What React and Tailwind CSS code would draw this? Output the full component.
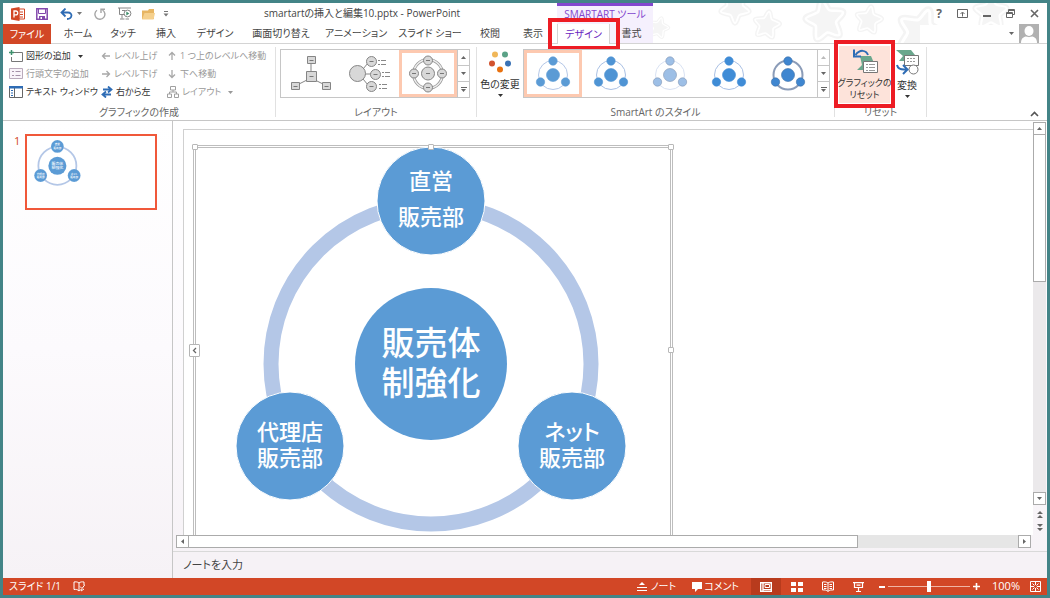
// src/App.jsx
import React from "react";

const TABS = [
  { label: "ホーム", cls: "w-[54px]" },
  { label: "タッチ", cls: "w-[36px]" },
  { label: "挿入", cls: "w-[50px]" },
  { label: "デザイン", cls: "w-[48px]" },
  { label: "画面切り替え", cls: "w-[84px]" },
  { label: "アニメーション", cls: "w-[66px]" },
  { label: "スライド ショー", cls: "w-[82px]" },
  { label: "校閲", cls: "w-[38px]" },
  { label: "表示", cls: "w-[48px]" },
];

const STAR =
  "M12 1c1.4 0 2 5 3.2 6.2S23 8.400 23 10s-4.600 3.600-5 5 1.800 6.600.6 7.600S13.400 20 12 20s-5.400 3.600-6.600 2.600S6.400 16.400 6 15s-5-3.400-5-5 6.600-1.600 7.800-2.800S10.600 1 12 1z";

function Caret({ className = "" }) {
  return (
    <svg className={`h-[3px] w-[5px] shrink-0 ${className}`} viewBox="0 0 5 3" fill="currentColor" aria-hidden="true">
      <path d="M0 0h5L2.500 3z" />
    </svg>
  );
}

function Icon({ className = "size-4", box = "0 0 16 16", children }) {
  return (
    <svg className={`shrink-0 ${className}`} viewBox={box} fill="none" aria-hidden="true">
      {children}
    </svg>
  );
}

function Star({ className, rotate }) {
  return (
    <svg className={className} viewBox="-2 -2 28 28" aria-hidden="true">
      <g transform={`rotate(${rotate} 12 12)`} strokeLinejoin="round">
        <path d={STAR} fill="#f6f6f6" stroke="#f4f4f4" strokeWidth="4" />
        <path d={STAR} fill="#f5f5f5" stroke="#fff" strokeWidth="1.500" />
      </g>
    </svg>
  );
}

function TitleBar() {
  return (
    <div className="relative flex h-[21px] items-center">
      <div className="flex items-center pl-2">
        <Icon className="size-[14px]" box="0 0 14 14">
          <path d="M8 2h5.500v10H8z" fill="#fff" stroke="#d24726" />
          <path d="M9 5h3M9 7.500h3M9 10h3" stroke="#d24726" />
          <path d="M0 1.500 8.500 0v14L0 12.500z" fill="#d24726" />
          <path d="M3 10.500V4h1.800a1.700 1.700 0 0 1 0 3.800H3" stroke="#fff" strokeWidth="1.300" />
        </Icon>
        <button aria-label="上書き保存" className="ml-[11px]">
          <Icon className="size-3" box="0 0 12 12">
            <path d="M.8.800h10.400v10.400H.8z" stroke="#8349ad" strokeWidth="1.500" />
            <path d="M2.500 1v4.500h7V1" stroke="#8349ad" />
            <path d="M3 8h6v3.500H3z" fill="#8349ad" />
            <path d="M4.500 9h1.500v2H4.500z" fill="#fff" />
          </Icon>
        </button>
        <button aria-label="元に戻す" className="ml-3 flex items-center gap-1 text-[#777]">
          <Icon className="h-3 w-[13px]" box="0 0 13 12">
            <path d="M1.500 4.500h6.500c5 0 4.500 6.500-1 6.500M5.500.500l-4 4 4 4" stroke="#2e6cb5" strokeWidth="1.800" />
          </Icon>
          <Caret />
        </button>
        <button aria-label="繰り返し" className="ml-3">
          <Icon className="size-3" box="0 0 12 12">
            <path d="M3 2.200a5 5 0 1 0 5.500-.2M7 5V1.200h4" stroke="#a5a5a5" strokeWidth="1.400" />
          </Icon>
        </button>
        <button aria-label="最初から開始" className="ml-3">
          <Icon className="h-[13px] w-[14px]" box="0 0 14 13">
            <path d="M0 1h13M1.500 1v6.500H6M4 7.500v4M2 12h4.500M4 3.500h3" stroke="#888" />
            <circle cx="9.500" cy="6.500" r="3.400" fill="#fff" stroke="#888" />
            <path d="m8.300 4.600 3 1.900-3 1.900z" fill="#3d8f6c" />
            <path d="M7.500 12h3.500" stroke="#888" />
          </Icon>
        </button>
        <button aria-label="開く" className="ml-[10px]">
          <Icon className="h-3 w-[13px]" box="0 0 13 12">
            <path d="M0 2.500h6l1-1.500h5v10H0z" fill="#e7b562" />
            <path d="M2.500 5H13l-1.500 6.500H0z" fill="#f5d08d" />
          </Icon>
        </button>
        <button aria-label="クイック アクセスのカスタマイズ" className="ml-[8px] text-[#777]">
          <Icon className="size-[6px]" box="0 0 6 6">
            <path d="M1 .500h4" stroke="currentColor" />
            <path d="M.5 2.500h5L3 5.500z" fill="currentColor" />
          </Icon>
        </button>
      </div>
      <h1 className="ml-[95px] text-[10px] text-[#444]">smartartの挿入と編集10.pptx - PowerPoint</h1>
      <div className="ml-auto flex items-center gap-[15px] pr-2 text-[#666]">
        <button aria-label="ヘルプ" className="text-[12px] leading-3 font-bold">?</button>
        <button aria-label="リボンの表示オプション">
          <Icon className="h-[10px] w-[11px]" box="0 0 11 10">
            <path d="M.5.500h10v8H.5z" stroke="currentColor" />
            <path d="M5.500 7.500v-4M3.500 5l2-2 2 2" stroke="currentColor" />
          </Icon>
        </button>
        <button aria-label="最小化">
          <Icon className="h-2 w-2" box="0 0 8 8"><path d="M0 6h8" stroke="currentColor" strokeWidth="2" /></Icon>
        </button>
        <button aria-label="元に戻す (縮小)">
          <Icon className="size-[9px]" box="0 0 9 9">
            <path d="M.5 3.500h6v5h-6zM2.500 3V.500h6v5H7M2.500 1.500h6M.5 4.500h6" stroke="currentColor" />
          </Icon>
        </button>
        <button aria-label="閉じる">
          <Icon className="size-[9px]" box="0 0 9 9"><path d="m1 1 7 7M8 1 1 8" stroke="currentColor" strokeWidth="1.600" /></Icon>
        </button>
      </div>
    </div>
  );
}

function TabRow() {
  return (
    <nav className="relative flex h-5 items-stretch text-[10px] text-[#444]">
      <button className="w-12 bg-[#d24726] text-white">ファイル</button>
      {TABS.map((t, i) => (
        <button key={i} className={`shrink-0 border-b border-[#d4d4d4] whitespace-nowrap ${t.cls}`}>
          {t.label}
        </button>
      ))}
      <div className="relative flex bg-[#f5f0fd]">
        <div className="absolute bottom-full left-0 h-[21px] w-full border-t-[3px] border-[#8347ce] bg-[#f5f0fd] text-center text-[10px] leading-[17px] whitespace-nowrap text-[#8347ce]">
          SMARTART ツール
        </div>
        <button className="w-[53px] border-x border-[#d4d4d4] bg-white text-[#6a1fc0]">デザイン</button>
        <button className="w-[43px] border-b border-[#d4d4d4]">書式</button>
        <div className="pointer-events-none absolute -top-[6px] -left-[9px] h-8 w-[72px] border-4 border-[#ed1c24]" />
      </div>
      <div className="flex flex-1 items-end justify-end border-b border-[#d4d4d4] pr-2">
        <button aria-label="アカウント" className="flex items-center gap-[5px] text-[#666]">
          <div className="h-[18px] w-[84px] bg-white" />
          <Caret />
          <Icon className="h-[19px] w-5" box="0 0 20 19">
            <path d="M0 0h20v19H0z" fill="#b1b1b1" />
            <ellipse cx="10" cy="7" rx="4.500" ry="5" fill="#fff" />
            <path d="M2 19c0-5 3-7 8-7s8 2 8 7z" fill="#fff" />
            <path d="M6.500 11.500c2 1.500 5 1.500 7 0" stroke="#b1b1b1" />
          </Icon>
        </button>
      </div>
    </nav>
  );
}

function Group({ label, className = "", children }) {
  return (
    <section className={`flex shrink-0 flex-col ${className}`}>
      <div className="h-[60px]">{children}</div>
      <h2 className="text-center text-[10px] leading-4 text-[#666]">{label}</h2>
    </section>
  );
}

function Divider() {
  return <div className="my-[3px] w-px shrink-0 bg-[#e1e1e1]" />;
}

function Command({ label, icon, caret, off }) {
  return (
    <button className={`flex h-[18px] items-center gap-[3px] whitespace-nowrap ${off ? "text-[#999]" : "text-[#333]"}`}>
      {icon}
      <span>{label}</span>
      {caret && <Caret className="ml-1" />}
    </button>
  );
}

function Arrow({ turn }) {
  return (
    <Icon className="size-[10px]" box="0 0 10 10">
      <path d="M9 5H2M4.500 2 1.500 5l3 3" stroke="#a8a8a8" strokeWidth="1.300" transform={`rotate(${turn} 5 5)`} />
    </Icon>
  );
}

function CreateGraphic() {
  return (
    <div className="grid h-full grid-cols-[92px_66px_1fr] content-start pt-[3px] pl-[6px] text-[9px]">
      <div>
        <Command
          label="図形の追加"
          caret
          icon={
            <Icon className="h-3 w-[14px]" box="0 0 14 12">
              <path d="M5 2.500h8.500v9h-11V7" stroke="#777" />
              <path d="M2.500 0v5M0 2.500h5" stroke="#3d8f6c" strokeWidth="1.500" />
            </Icon>
          }
        />
        <Command
          label="行頭文字の追加"
          off
          icon={
            <Icon className="h-3 w-[14px]" box="0 0 14 12">
              <path d="M.5.500h13v10H.5z" fill="#f9f4fa" stroke="#b9aabb" />
              <path d="M3 3.500h2M3 7.500h2M6.500 3.500h5M6.500 7.500h5" stroke="#a592a8" />
            </Icon>
          }
        />
        <Command
          label="テキスト ウィンドウ"
          icon={
            <Icon className="h-3 w-[14px]" box="0 0 14 12">
              <path d="M.5.500h13v11H.5zM5.500 2v9" fill="#fff" stroke="#666" />
              <path d="M0 0h14v2.500H0z" fill="#2e6cb5" />
              <path d="M2 4.500h2M2 7h2M2 9.500h2" stroke="#2e6cb5" />
            </Icon>
          }
        />
      </div>
      <div>
        <Command label="レベル上げ" off icon={<Arrow turn={0} />} />
        <Command label="レベル下げ" off icon={<Arrow turn={180} />} />
        <Command
          label="右から左"
          icon={
            <Icon className="size-3" box="0 0 12 12">
              <path d="M2 3.500h8M7 .500l3.500 3L7 6.500M10 8.500H2M5 5.500l-3.500 3 3.500 3" stroke="#2e6cb5" strokeWidth="1.800" />
            </Icon>
          }
        />
      </div>
      <div>
        <Command label="1 つ上のレベルへ移動" off icon={<Arrow turn={90} />} />
        <Command label="下へ移動" off icon={<Arrow turn={270} />} />
        <Command
          label="レイアウト"
          off
          caret
          icon={
            <Icon className="size-3" box="0 0 12 12">
              <path d="M3.500.500h5v3.500h-5zM.5 8h4v3.500h-4zM7.500 8h4v3.500h-4zM6 4v2M2.500 8V6h7v2" stroke="#a0a0a0" />
            </Icon>
          }
        />
      </div>
    </div>
  );
}

function GalleryScroll({ dimUp }) {
  return (
    <div className="flex w-3 shrink-0 flex-col divide-y divide-[#c6c6c6] border-l border-[#c6c6c6] text-[#666]">
      <button aria-label="前の行" className={`flex flex-1 items-center justify-center ${dimUp ? "text-[#bbb]" : ""}`}>
        <Caret className="rotate-180" />
      </button>
      <button aria-label="次の行" className="flex flex-1 items-center justify-center">
        <Caret />
      </button>
      <button aria-label="その他" className="flex flex-1 flex-col items-center justify-center gap-px">
        <div className="h-px w-[6px] bg-[#666]" />
        <Caret />
      </button>
    </div>
  );
}

function Node({ x, y, r }) {
  return (
    <g>
      <circle cx={x} cy={y} r={r} fill="#d8d8d8" stroke="#858585" />
      <path d={`M${x - 2} ${y}h4`} stroke="#777" />
    </g>
  );
}

function LayoutGallery() {
  return (
    <div className="mt-[5px] ml-[4px] flex h-[49px] w-[190px] border border-[#c6c6c6]">
      <button aria-label="階層" className="flex flex-1 items-center justify-center">
        <Icon className="h-9 w-[42px]" box="0 0 42 36">
          <path d="M21 8v10M17 24l-8 4M25 24l8 4" stroke="#858585" />
          <path d="M17.500.500h8v7h-8zM16.500 15.500h10v10h-10zM1.500 26.500h8v7h-8zM32.500 26.500h8v7h-8z" fill="#d8d8d8" stroke="#858585" />
          <path d="M19.500 4.500h4M19.500 20.500h4M3.500 30.500h4M34.500 30.500h4" stroke="#777" />
        </Icon>
      </button>
      <button aria-label="放射リスト" className="flex flex-1 items-center justify-center">
        <Icon className="h-9 w-[42px]" box="0 0 42 36">
          <path d="m14 13 5-6M16 18h6M14 23l5 6" stroke="#858585" />
          <circle cx="8.500" cy="17.500" r="8" fill="#d8d8d8" stroke="#858585" />
          <Node x={22.5} y={5.5} r={5} />
          <Node x={26.5} y={18.5} r={5} />
          <Node x={22.5} y={30.5} r={5} />
          <path
            d="M29 4.500h2M32 4.500h5M29 8.500h2M32 8.500h5M33 16.500h2M36 16.500h5M33 20.500h2M36 20.500h5M30 28.500h2M33 28.500h5M30 32.500h2M33 32.500h5"
            stroke="#888"
          />
        </Icon>
      </button>
      <button aria-label="中心付き循環" className="flex w-[58px] shrink-0 items-center justify-center border-[3px] border-[#fdc9b0]">
        <Icon className="size-[38px]" box="0 0 38 38">
          <circle cx="19" cy="19" r="14.500" stroke="#999" strokeWidth="3" />
          <circle cx="19" cy="19" r="14.500" stroke="#eee" strokeWidth="1.400" />
          <Node x={19} y={18.5} r={6.5} />
          <Node x={19} y={5.5} r={4.5} />
          <Node x={5} y={18.5} r={4.5} />
          <Node x={33} y={18.5} r={4.5} />
          <Node x={19} y={32.5} r={4.5} />
        </Icon>
      </button>
      <GalleryScroll />
    </div>
  );
}

const STYLES = [
  { fill: "#5b9bd5", ring: "#b4c7e7", w: 1 },
  { fill: "#4f94d4", ring: "#a9c0e4", w: 1 },
  { fill: "#9dbfe6", edge: "#8296b4", ring: "#d9e2f3", w: 1 },
  { fill: "#3f8cd6", ring: "#a9c0e4", w: 1 },
  { fill: "#3f86d0", edge: "#3a6ea8", ring: "#8b9cb8", w: 2 },
];

function StyleGallery() {
  return (
    <div className="mt-[5px] flex h-[49px] w-[307px] border border-[#c6c6c6]">
      {STYLES.map((s, i) => (
        <button
          key={i}
          aria-label={`スタイル ${i + 1}`}
          className={`flex items-center justify-center ${i === 0 ? "w-[58px] border-[3px] border-[#fdc9b0]" : "flex-1"}`}
        >
          <Icon className="h-9 w-9" box="0 0 36 36">
            <circle cx="18" cy="19" r="14.500" stroke={s.ring} strokeWidth={s.w} />
            <g fill={s.fill} stroke={s.edge || s.fill} strokeWidth=".6">
              <circle cx="18" cy="19" r="6.500" />
              <circle cx="18" cy="5" r="4.200" />
              <circle cx="5.500" cy="26" r="4.200" />
              <circle cx="30.500" cy="26" r="4.200" />
            </g>
          </Icon>
        </button>
      ))}
      <GalleryScroll dimUp />
    </div>
  );
}

function Ribbon() {
  return (
    <div className="relative flex h-[77px] border-b border-[#c6c6c6]">
      <Group label="グラフィックの作成" className="w-[272px]">
        <CreateGraphic />
      </Group>
      <Divider />
      <Group label="レイアウト" className="w-[200px]">
        <LayoutGallery />
      </Group>
      <Divider />
      <Group label="SmartArt のスタイル" className="w-[357px]">
        <div className="flex">
          <button className="flex w-[46px] flex-col items-center pt-[7px] text-[10px] whitespace-nowrap text-[#333]">
            <Icon className="h-[23px] w-[24px]" box="0 0 24 23">
              <circle cx="7" cy="3.500" r="3" fill="#f0b759" />
              <circle cx="17" cy="3.500" r="3" fill="#5ba287" />
              <circle cx="4" cy="12.500" r="3" fill="#d2532f" />
              <circle cx="20" cy="12.500" r="3" fill="#3a72b5" />
              <circle cx="12" cy="18.500" r="3" fill="#e8710f" />
            </Icon>
            <span className="mt-[3px] leading-[14px]">色の変更</span>
            <Caret className="mt-[3px]" />
          </button>
          <StyleGallery />
        </div>
      </Group>
      <Divider />
      <Group label="リセット" className="w-[91px]">
        <div className="flex text-[10px] text-[#333]">
          <div className="relative">
            <button className="mt-[2px] ml-1 flex h-[57px] w-[51px] flex-col items-center bg-[#fde3da] pt-[3px] text-[9px] leading-[12px] whitespace-nowrap">
              <Icon className="h-[25px] w-[26px]" box="0 0 26 25">
                <path d="M8 7h11l6 14H5l5-5z" fill="#6aa78d" />
                <path d="M11.500 12.500h14v11h-14z" fill="#fff" stroke="#777" />
                <path d="M14 15.500h2M17 15.500h6M14 18.500h2M17 18.500h6M14 21.500h2M17 21.500h6" stroke="#999" />
                <path d="M16 6C14 1 8 0 3.500 6M2 .500v7h7" stroke="#2e6cb5" strokeWidth="2" />
              </Icon>
              <span className="mt-[3px]">グラフィックの</span>
              <span>リセット</span>
            </button>
            <div className="pointer-events-none absolute -top-1 -left-px h-[68px] w-[61px] border-4 border-[#ed1c24]" />
          </div>
          <button className="flex w-[34px] flex-col items-center pt-[6px] text-[10px]">
            <Icon className="h-[25px] w-[23px]" box="0 0 23 25">
              <path d="M0 0h15l4 5v6H3l4-5z" fill="#6aa78d" />
              <path d="M8.500 5.500h14v10h-14z" fill="#fff" stroke="#777" />
              <path d="M11 8.500h9M11 11.500h9" stroke="#999" strokeDasharray="2 1" />
              <circle cx="17.500" cy="19.500" r="4.500" fill="#fff" stroke="#777" />
              <path d="M1 15c1 4 4 5 9 4.500M7 15l4.500 4.500L7 24" stroke="#2e6cb5" strokeWidth="2" />
            </Icon>
            <span className="mt-[3px] leading-[14px]">変換</span>
            <Caret className="mt-[3px]" />
          </button>
        </div>
      </Group>
      <Divider />
      <button aria-label="リボンを折りたたむ" className="mt-auto mr-2 mb-[2px] ml-auto text-[#555]">
        <Icon className="h-2 w-[9px]" box="0 0 9 8"><path d="m1 6 3.500-3.500L8 6" stroke="currentColor" strokeWidth="1.600" /></Icon>
      </button>
    </div>
  );
}

// Three departments around a core. Units are slide pixels.
const NODES = [
  { x: 238, y: 54, lines: ["直営", "販売部"], dy: [-12, 24] },
  { x: 97, y: 299, lines: ["代理店", "販売部"], dy: [-6, 20] },
  { x: 379, y: 299, lines: ["ネット", "販売部"], dy: [-6, 20] },
];

function Diagram({ className }) {
  return (
    <svg
      className={className}
      viewBox="0 0 478 387"
      fill="#fff"
      fontFamily="'Liberation Sans', 'Noto Sans CJK JP', sans-serif"
      fontWeight="500"
      textAnchor="middle"
    >
      <circle cx="238" cy="217" r="160" fill="none" stroke="#b4c7e7" strokeWidth="15" />
      <circle cx="238" cy="217" r="76" fill="#5b9bd5" />
      <text x="238" y="208" fontSize="33">販売体</text>
      <text x="238" y="248" fontSize="33">制強化</text>
      {NODES.map((n, i) => (
        <g key={i} fontSize="22">
          <circle cx={n.x} cy={n.y} r="54" fill="#5b9bd5" stroke="#fff" />
          <text x={n.x} y={n.y + n.dy[0]}>{n.lines[0]}</text>
          <text x={n.x} y={n.y + n.dy[1]}>{n.lines[1]}</text>
        </g>
      ))}
    </svg>
  );
}

function Handle({ className }) {
  return <div className={`absolute size-[6px] rounded-[1px] border border-[#b8b8b8] bg-white ${className}`} />;
}

function ScrollButton({ label, turn }) {
  return (
    <button aria-label={label} className="flex size-[13px] shrink-0 items-center justify-center border border-[#ababab] bg-white text-[#666]">
      <Caret className={turn} />
    </button>
  );
}

function Canvas() {
  return (
    <div className="flex min-h-0 flex-1">
      <div className="flex min-w-0 flex-1 flex-col pl-[3px]">
        <div className="relative mt-2 ml-[7px] min-h-0 flex-1 overflow-hidden border-t border-l border-[#d0d0d0] bg-white">
          {/* selected SmartArt frame */}
          <div className="absolute top-[15px] left-[9px] h-[400px] w-[480px] border-[3px] border-double border-[#bdbdbd]">
            <Diagram className="absolute -top-[1px] -left-[3px] h-[387px] w-[478px]" />
            <Handle className="-top-1 -left-1" />
            <Handle className="-top-1 left-[232px]" />
            <Handle className="-top-1 -right-1" />
            <Handle className="top-[199px] -right-1" />
            <button aria-label="テキスト ウィンドウを開く" className="absolute top-[196px] -left-[7px] flex h-[13px] w-[11px] items-center justify-center rounded-[1px] border border-[#b5b5b5] bg-white">
              <Icon className="h-[7px] w-[5px]" box="0 0 5 7"><path d="M4 1 1.500 3.500 4 6" stroke="#666" strokeWidth="1.300" /></Icon>
            </button>
          </div>
        </div>
        <div className="mr-[2px] mb-[3px] flex h-[13px] bg-[#e6e6e6]">
          <ScrollButton label="左へ" turn="rotate-90" />
          <div className="-ml-px flex-[67] border border-[#ababab] bg-white" />
          <div className="flex-[16]" />
          <ScrollButton label="右へ" turn="-rotate-90" />
        </div>
      </div>
      <div className="mr-px mb-4 flex w-[13px] flex-col items-center pt-px text-[#666]">
        <ScrollButton label="上へ" turn="rotate-180" />
        <div className="-mt-px h-[148px] w-[13px] border border-[#ababab] bg-white" />
        <div className="w-[13px] flex-1 bg-[#ebe9eb]" />
        <ScrollButton label="下へ" turn="" />
        <button aria-label="前のスライド" className="mt-[2px] flex h-[14px] items-center">
          <Icon className="size-2" box="0 0 8 8"><path d="m1 4 3-3 3 3zM1 8l3-3 3 3z" fill="currentColor" /></Icon>
        </button>
        <button aria-label="次のスライド" className="flex h-[14px] items-center">
          <Icon className="size-2" box="0 0 8 8"><path d="m1 0 3 3 3-3zM1 4l3 3 3-3z" fill="currentColor" /></Icon>
        </button>
      </div>
    </div>
  );
}

function StatusBar() {
  return (
    <footer className="flex h-[17px] items-center bg-[#d24726] text-[10px] text-white">
      <span className="pl-[6px]">スライド 1/1</span>
      <button aria-label="スペル チェック" className="ml-3">
        <Icon className="h-[11px] w-3" box="0 0 12 11">
          <path d="M6 2C4 .500 2.500.800 1 1v7.500c2-.3 3.500 0 5 1.500 1-1 2-1.300 3-1.500M6 2v8M6 2c1.500-1.300 3-1.200 5-1v3" stroke="#fff" />
          <path d="m7 5.500 2 2 3-4M8 10l3-2" stroke="#fff" />
        </Icon>
      </button>
      <div className="ml-auto flex h-full items-center">
        <button className="mr-4 flex items-center gap-1">
          <Icon className="h-[10px] w-[10px]" box="0 0 10 10">
            <path d="M5 0 8 3H2z" fill="#fff" />
            <path d="M0 5.500h10M0 8.500h10" stroke="#fff" />
          </Icon>
          ノート
        </button>
        <button className="mr-3 flex items-center gap-[2px]">
          <Icon className="h-[10px] w-[10px]" box="0 0 10 10"><path d="M0 0h10v7H6L3 10V7H0z" fill="#fff" /></Icon>
          コメント
        </button>
        <button aria-label="標準" className="flex h-full w-[30px] items-center justify-center bg-[#b83b1d]">
          <Icon className="h-[10px] w-3" box="0 0 12 10">
            <path d="M.7.700h10.600v8.600H.7zM3 1v8" stroke="#fff" strokeWidth="1.400" />
            <path d="M5 2.500h4.500v3H5zM3 7.500h8" stroke="#fff" />
          </Icon>
        </button>
        <button aria-label="スライド一覧" className="flex w-[31px] justify-center">
          <Icon className="h-[10px] w-3" box="0 0 12 10"><path d="M0 0h5v4H0zM7 0h5v4H7zM0 6h5v4H0zM7 6h5v4H7z" fill="#fff" /></Icon>
        </button>
        <button aria-label="閲覧表示" className="flex w-[31px] justify-center">
          <Icon className="h-[11px] w-3" box="0 0 12 11">
            <path d="M6 2C4.500.800 2.500.800.500 1v8c2-.2 4 0 5.500 1.500C7.500 9 9.500 8.800 11.500 9V1C9.500.800 7.500.800 6 2zv8M2 3.500h2.500M2 5.500h2.500M2 7.500h2.500M7.500 3.500H10M7.500 5.500H10M7.500 7.500H10" stroke="#fff" />
          </Icon>
        </button>
        <button aria-label="スライド ショー" className="flex w-[31px] justify-center">
          <Icon className="h-[10px] w-[11px]" box="0 0 11 10">
            <path d="M0 .700h11M1.500 1v4.500h8V1M3.500 3.200h4M5.500 6v3M3 9.500h5" stroke="#fff" strokeWidth="1.200" />
          </Icon>
        </button>
        <button aria-label="縮小" className="ml-[5px] flex">
          <Icon className="h-2 w-[6px]" box="0 0 6 8"><path d="M0 4h6" stroke="#fff" strokeWidth="2" /></Icon>
        </button>
        <input
          type="range"
          aria-label="ズーム"
          defaultValue="50"
          className="mx-[3px] h-3 w-[82px] appearance-none bg-transparent [&::-webkit-slider-runnable-track]:h-px [&::-webkit-slider-runnable-track]:bg-[#f0b5a5] [&::-webkit-slider-thumb]:-mt-[5px] [&::-webkit-slider-thumb]:h-[11px] [&::-webkit-slider-thumb]:w-1 [&::-webkit-slider-thumb]:appearance-none [&::-webkit-slider-thumb]:bg-white"
        />
        <button aria-label="拡大" className="flex">
          <Icon className="size-[7px]" box="0 0 7 7"><path d="M0 3.500h7M3.500 0v7" stroke="#fff" strokeWidth="1.600" /></Icon>
        </button>
        <button className="ml-3 text-[11px]">100%</button>
        <button aria-label="ウィンドウに合わせる" className="mr-[6px] ml-[10px]">
          <Icon className="size-[11px]" box="0 0 11 11">
            <path d="M.5.500h10v10H.5z" stroke="#fff" />
            <path d="M5.500 1v3M5.500 7v3M1 5.500h3M7 5.500h3M2.500 2.500l2 2M8.500 2.500l-2 2M2.500 8.500l2-2M8.500 8.500l-2-2" stroke="#fff" />
          </Icon>
        </button>
      </div>
    </footer>
  );
}

export default function App() {
  return (
    <div
      lang="ja"
      className="flex h-screen flex-col border-[3px] border-[#438487] bg-white font-['Open_Sans','Noto_Sans_CJK_JP',sans-serif] [font-feature-settings:'palt']"
    >
      <header className="relative shrink-0">
        <div className="pointer-events-none absolute top-0 right-0 h-10 w-[400px] overflow-hidden">
          <Star className="absolute top-[12px] left-0 size-6" rotate={15} />
          <Star className="absolute -top-3 left-[70px] size-9" rotate={180} />
          <Star className="absolute top-[5px] left-[104px] size-8" rotate={10} />
          <Star className="absolute -top-2 left-[154px] size-12" rotate={-10} />
          <Star className="absolute top-0 left-[206px] size-8" rotate={10} />
          <Star className="absolute top-0 left-[246px] size-14" rotate={20} />
          <Star className="absolute -top-3 left-[324px] size-10" rotate={0} />
        </div>
        <TitleBar />
        <TabRow />
        <Ribbon />
      </header>
      <main className="flex min-h-0 flex-1 bg-linear-to-b from-white via-[#fcfafd] to-[#f6f2f6]">
        <aside className="flex w-[170px] shrink-0 items-start gap-[5px] border-r border-[#c6c6c6] pt-[13px] pl-[11px]">
          <span className="text-[11px] leading-[14px] text-[#d24726]">1</span>
          <button aria-label="スライド 1" className="relative h-[76px] w-[132px] border-2 border-[#f0583a] bg-white">
            <Diagram className="absolute top-1 left-[2px] h-[46px] w-[57px]" />
          </button>
        </aside>
        <div className="flex min-w-0 flex-1 flex-col">
          <Canvas />
          <label className="flex h-[27px] shrink-0 items-center border-t border-[#d9d9d9] bg-[#f6f2f6]">
            <input
              aria-label="ノート"
              placeholder="ノートを入力"
              className="w-full bg-transparent px-[10px] text-[11px] placeholder:text-[#444]"
            />
          </label>
        </div>
      </main>
      <StatusBar />
    </div>
  );
}
